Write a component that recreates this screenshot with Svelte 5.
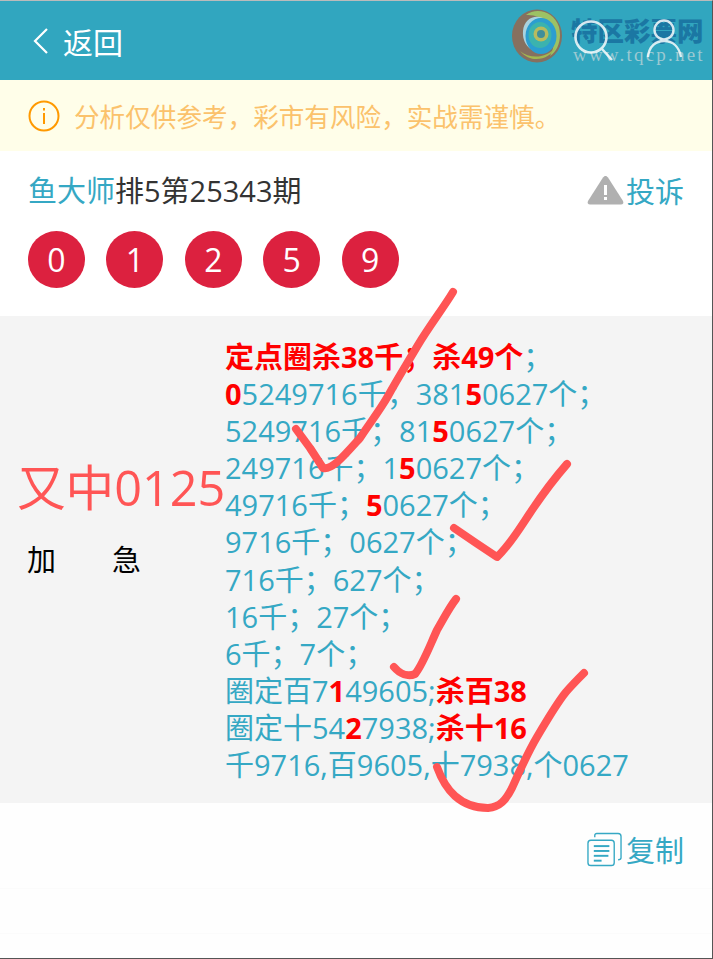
<script>
  const balls = ['0', '1', '2', '5', '9'];

  // r = red bold fragment, plain strings are teal
  const lines = [
    [{ r: '定点圈杀38千；杀49个' }, '；'],
    [{ r: '0' }, '5249716千；381', { r: '5' }, '0627个；'],
    ['5249716千；81', { r: '5' }, '0627个；'],
    ['249716千；1', { r: '5' }, '0627个；'],
    ['49716千；', { r: '5' }, '0627个；'],
    ['9716千；0627个；'],
    ['716千；627个；'],
    ['16千；27个；'],
    ['6千；7个；'],
    ['圈定百7', { r: '1' }, '49605;', { r: '杀百38' }],
    ['圈定十54', { r: '2' }, '7938;', { r: '杀十16' }],
    ['千9716,百9605,十7938,个0627']
  ];

  const checks = [
    'M296 429 L310 448 L323 468 C332 470 342 458 360 438 C372 420 380 410 388 396 C398 378 408 362 418 345 C430 325 442 310 453 292',
    'M454 528 L476 543 L497 557 C510 545 520 528 530 513 C542 495 553 480 567 464',
    'M394 667 C400 674 408 677 415 674 C422 666 428 650 437 630 C444 618 449 608 456 599',
    'M437 767 C441 778 446 788 455 796 C464 804 475 808 488 808 C500 807 506 800 512 788 C520 770 528 752 537 737 C547 720 557 703 566 692 C572 685 577 680 584 673'
  ];
</script>

<div class="page">
  <header class="topbar">
    <div class="back">
      <svg width="18" height="28" viewBox="0 0 18 28" fill="none" stroke="#fff" stroke-width="2.2"><polyline points="15,2 3,14 15,26" /></svg>
      <span>返回</span>
    </div>
    <div class="watermark">
      <svg width="50" height="54" viewBox="0 0 50 54">
        <ellipse cx="25" cy="27" rx="25" ry="26.5" fill="#86705f" />
        <path d="M14 6 C24 -2 42 2 47 18 C50 30 46 42 38 47 C44 36 44 20 34 12 C28 7 20 6 14 6Z" fill="#9cc264" />
        <path d="M8 42 C18 50 34 50 44 38 C38 50 20 56 8 42Z" fill="#a2b850" />
        <path d="M11 22 C12 10 22 5 31 9 C24 9 17 14 16 24 C15 32 19 40 28 43 C18 43 10 34 11 22Z" fill="#a9d3df" />
        <ellipse cx="29" cy="27" rx="15.5" ry="18" fill="#2b9ed0" />
        <ellipse cx="28" cy="26" rx="11.5" ry="13" fill="#3bb3ae" />
        <circle cx="29" cy="25" r="7.5" fill="#b7bb5e" />
        <circle cx="29" cy="25" r="4" fill="#3f8e9a" />
      </svg>
    </div>
    <div class="mark-text">
      <b>特区彩票网</b>
      <i>www.tqcp.net</i>
    </div>
    <div class="actions">
      <svg width="42" height="44" viewBox="0 0 42 44" fill="none" stroke="#fff" stroke-width="2.6"><circle cx="18" cy="18" r="15.5" /><line x1="29" y1="30" x2="39" y2="41" /></svg>
      <svg width="40" height="44" viewBox="0 0 40 44" fill="none" stroke="#fff" stroke-width="2.4"><circle cx="18" cy="11" r="9.5" /><path d="M2 38 C3 27 10 22 18 22 C26 22 33 27 35 38" /></svg>
    </div>
  </header>

  <div class="notice">
    <svg width="32" height="32" viewBox="0 0 32 32" fill="none" stroke="#f90" stroke-width="2"><circle cx="16" cy="16" r="14.5" /><line x1="16" y1="13" x2="16" y2="24" /><line x1="16" y1="8" x2="16" y2="10.5" /></svg>
    <span>分析仅供参考，彩市有风险，实战需谨慎。</span>
  </div>

  <section class="head">
    <div class="title-row">
      <div class="title"><span class="teal">鱼大师</span>排5第25343期</div>
      <div class="report">
        <svg width="37" height="30" viewBox="0 0 37 30"><path d="M18.5 1 C19.5 1 20.3 1.6 21 2.6 L36 26 C37 28 36 29.5 34 29.5 L3 29.5 C1 29.5 0 28 1 26 L16 2.6 C16.7 1.6 17.5 1 18.5 1Z" fill="#b0b0b0" /><rect x="17" y="10" width="3" height="10" fill="#fff" /><rect x="17" y="22" width="3" height="3" fill="#fff" /></svg>
        <span>投诉</span>
      </div>
    </div>
    <div class="balls">
      {#each balls as b}
        <div class="ball">{b}</div>
      {/each}
    </div>
  </section>

  <section class="plan">
    <div class="left">
      <div class="hit">又中0125</div>
      <div class="urgent"><span>加</span><span>急</span></div>
    </div>
    <div class="content">
      {#each lines as line}
        <div class="line">
          {#each line as part}
            {#if typeof part === 'string'}{part}{:else}<b>{part.r}</b>{/if}
          {/each}
        </div>
      {/each}
    </div>
  </section>

  <div class="copy-row">
    <div class="copy">
      <svg width="35" height="35" viewBox="0 0 36 35" fill="none" stroke="#35a8c4" stroke-width="1.4">
        <path d="M8 5 V3 C8 2 9 1 10 1 L32 1 C34 1 35 2 35 4 V26 C35 27 34 28 32 28" />
        <rect x="1" y="8" width="27" height="26" rx="3" />
        <g stroke-width="2"><line x1="7" y1="14" x2="23" y2="14" /><line x1="7" y1="19" x2="23" y2="19" /><line x1="7" y1="24" x2="22" y2="24" /><line x1="7" y1="29" x2="15" y2="29" /></g>
      </svg>
      <span>复制</span>
    </div>
  </div>
  <div class="empty-row"></div>

  <svg class="marks" width="713" height="959" viewBox="0 0 713 959" fill="none" stroke="#ff5555" stroke-width="8" stroke-linecap="round" stroke-linejoin="round">
    {#each checks as d}
      <path {d} />
    {/each}
  </svg>
</div>

<style>
  :global(body) { margin: 0; background: #fff; }
  .page { position: relative; width: 713px; height: 959px; box-sizing: border-box; border-top: 1px solid #bbb; border-right: 1px solid #555; border-bottom: 1px solid #555; overflow: hidden; font-family: "Open Sans", "Noto Sans CJK SC", sans-serif; color: #333; background: #fefefe; }

  .topbar { position: relative; height: 79px; background: #31a6bf; display: flex; align-items: center; justify-content: space-between; padding: 0 26px 0 32px; color: #fff; }
  .back { display: flex; align-items: center; gap: 13px; font-size: 30px; }
  .actions { position: relative; display: flex; align-items: center; gap: 31px; margin-top: 1px; opacity: 0.82; }
  .watermark { position: absolute; left: 512px; top: 8px; }
  .mark-text { position: absolute; left: 571px; top: 16px; display: flex; flex-direction: column; }
  .mark-text b { font-size: 26.5px; line-height: 28px; font-weight: 900; color: #1b77a3; white-space: nowrap; }
  .mark-text i { font-family: "Liberation Serif", serif; font-style: normal; font-size: 19px; line-height: 20px; letter-spacing: 2.2px; color: #9cc9d2; white-space: nowrap; margin-left: 2px; }

  .notice { height: 71px; background: #fffee9; display: flex; align-items: center; gap: 14px; padding-left: 28px; font-size: 25.6px; color: #fbc26c; }

  .head { height: 165px; background: #fff; padding: 0 28px; box-sizing: border-box; }
  .title-row { display: flex; justify-content: space-between; align-items: center; height: 80px; font-size: 29px; }
  .title { color: #333; margin-top: -4px; }
  .teal { color: #35a8c4; }
  .report { display: flex; align-items: center; gap: 2px; color: #35a8c4; margin-top: -3px; }
  .balls { display: flex; gap: 21.4px; }
  .ball { width: 57px; height: 57px; border-radius: 50%; background: #dc213f; color: #fff; font-size: 32px; display: flex; align-items: center; justify-content: center; }

  .plan { height: 487px; background: #f4f4f4; display: flex; align-items: flex-start; }
  .left { width: 225px; flex-shrink: 0; padding: 141px 0 0 17px; box-sizing: border-box; }
  .hit { font-size: 48.6px; line-height: 60px; color: #ff5555; white-space: nowrap; width: 208px; }
  .urgent { display: flex; gap: 56px; padding-left: 10px; margin-top: 23px; font-size: 29px; color: #000; line-height: 40px; }
  .content { font-size: 29px; line-height: 37.1px; color: #35a8c4; white-space: nowrap; margin-top: 22px; }
  .content b { color: #f00; }

  .copy-row { height: 86px; display: flex; justify-content: flex-end; align-items: center; padding-right: 28px; border-bottom: 1px solid #fbfbfb; box-sizing: border-box; }
  .copy { display: flex; align-items: center; gap: 4px; font-size: 29px; color: #35a8c4; margin-top: 7px; }
  .empty-row { height: 44px; border-bottom: 1px solid #fbfbfb; }

  .marks { position: absolute; left: 0; top: -1px; pointer-events: none; }
</style>
